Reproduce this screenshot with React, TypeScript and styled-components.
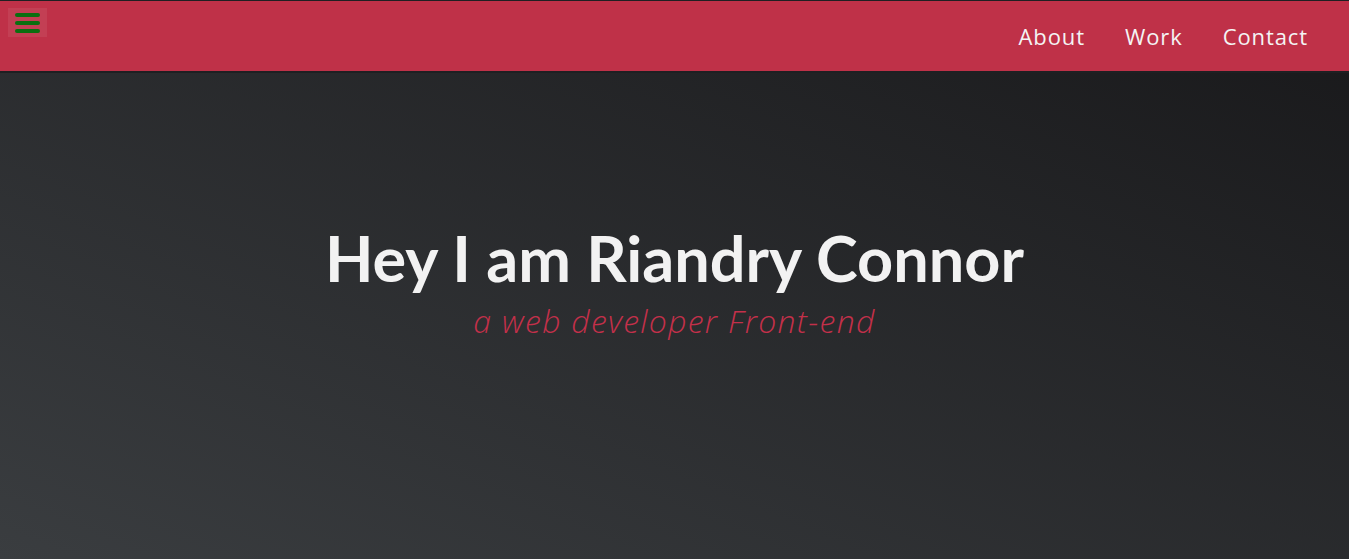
import React from "react";
import styled, { createGlobalStyle } from "styled-components";

const Global = createGlobalStyle`
  html, body { margin: 0; padding: 0; }
  body {
    min-height: 100vh;
    background: linear-gradient(to right top, #3a3d40, #18181a);
    font-family: "Lato", "Open Sans", sans-serif;
  }
  #root { min-height: 100vh; display: flex; flex-direction: column; }
`;

const Header = styled.header`
  height: 70px;
  background: #bf3148;
  border-top: 1px solid #1f1f22;
  border-bottom: 2px solid #1f1f22;
  display: flex;
  align-items: flex-start;
  justify-content: space-between;
`;

const MenuButton = styled.button`
  margin: 7px 0 0 8px;
  width: 39px;
  height: 29px;
  padding: 0;
  border: none;
  background: rgba(255, 255, 255, 0.07);
  display: flex;
  flex-direction: column;
  align-items: center;
  justify-content: center;
  gap: 4px;
`;

const Bar = styled.span`
  display: block;
  width: 25px;
  height: 4px;
  border-radius: 2px;
  background: #0b6f10;
`;

const Nav = styled.nav`
  display: flex;
  align-items: center;
  height: 100%;
  padding: 0 21px 2px 0;
`;

const NavLink = styled.a`
  color: #f4f4f4;
  font-family: "Open Sans", sans-serif;
  font-size: 22px;
  font-weight: 400;
  letter-spacing: 0.9px;
  padding: 0 20px;
  text-decoration: none;
  cursor: pointer;
`;

const Hero = styled.main`
  flex: 1;
  display: flex;
  flex-direction: column;
  align-items: center;
  justify-content: center;
  padding-bottom: 72px;
`;

const Title = styled.h1`
  margin: 0;
  color: #f2f2f2;
  font-family: "Lato", sans-serif;
  font-weight: 700;
  font-size: 63px;
  line-height: 1.2;
`;

const Subtitle = styled.p`
  margin: 6px 0 0;
  color: #c3304a;
  font-family: "Open Sans", sans-serif;
  font-weight: 300;
  font-style: italic;
  font-size: 32px;
  letter-spacing: 1.3px;
  line-height: 1.2;
`;

export default function App() {
  return (
    <>
      <Global />
      <Header>
        <MenuButton aria-label="menu">
          <Bar />
          <Bar />
          <Bar />
        </MenuButton>
        <Nav>
          <NavLink>About</NavLink>
          <NavLink>Work</NavLink>
          <NavLink>Contact</NavLink>
        </Nav>
      </Header>
      <Hero>
        <Title>Hey I am Riandry Connor</Title>
        <Subtitle>a web developer Front-end</Subtitle>
      </Hero>
    </>
  );
}
